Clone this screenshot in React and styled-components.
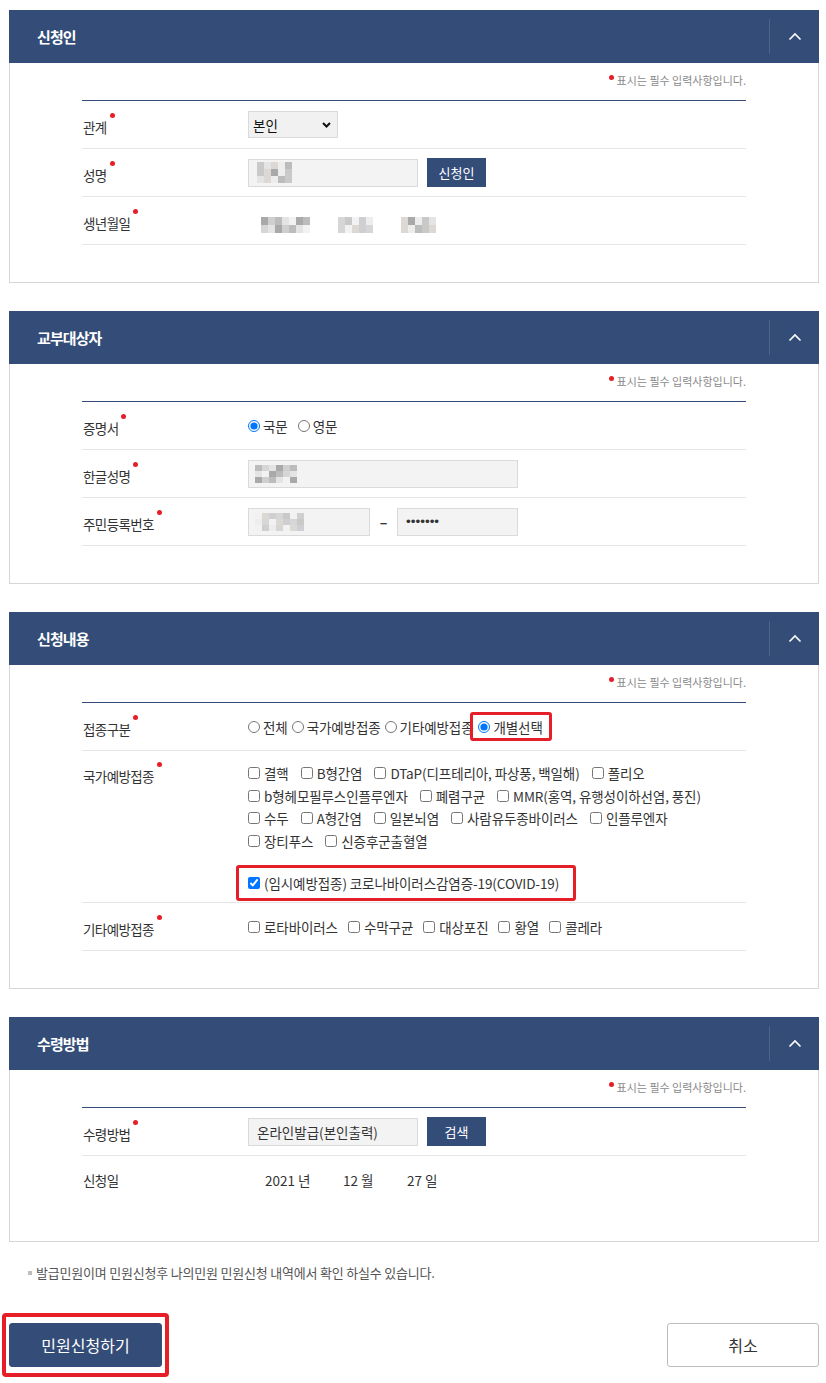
import React from 'react';
import styled, { createGlobalStyle } from 'styled-components';

const NAVY = '#344d78';
const RED = '#e61e27';

const GlobalStyle = createGlobalStyle`
  * { box-sizing: border-box; }
  body {
    margin: 0;
    background: #fff;
    color: #333;
    font-family: "Noto Sans CJK KR", "Noto Sans", sans-serif;
  }
`;

const Page = styled.div`
  width: 826px;
  padding: 10px 7px 6px 9px;
`;

const Panel = styled.section`
  margin-bottom: ${p => (p.$last ? '0' : '28px')};
`;

const PanelHead = styled.div`
  height: 53px;
  background: ${NAVY};
  display: flex;
  align-items: center;
  justify-content: space-between;
`;

const PanelTitle = styled.h2`
  margin: 0;
  padding-left: 28px;
  font-size: 15px;
  font-weight: 700;
  letter-spacing: -0.9px;
  color: #fff;
`;

const Toggle = styled.button`
  width: 50px;
  height: 35px;
  padding: 0;
  border: 0;
  border-left: 1px solid rgba(255, 255, 255, 0.13);
  background: none;
  display: flex;
  align-items: center;
  justify-content: center;
  cursor: pointer;
`;

const PanelBody = styled.div`
  border: 1px solid #d6d6d6;
  border-top: 0;
  padding: 7px 72px 37px;
`;

const Required = styled.p`
  margin: 0 0 10px;
  height: 20px;
  line-height: 20px;
  text-align: right;
  font-size: 11px;
  letter-spacing: 0;
  color: #8a8a8a;
`;

const Dot = styled.span`
  display: inline-block;
  width: 5px;
  height: 5px;
  border-radius: 50%;
  background: ${RED};
  vertical-align: ${p => p.$lift || '15px'};
  margin: 0 3px 0 ${p => p.$gap || '3px'};
`;

const Table = styled.div`
  border-top: 1px solid ${NAVY};
`;

const Row = styled.div`
  display: flex;
  align-items: ${p => (p.$top ? 'flex-start' : 'center')};
  min-height: 48px;
  padding: ${p => p.$pad || '0'};
  border-bottom: ${p => (p.$plain ? '0' : '1px solid #e6e6e6')};
`;

const Label = styled.div`
  width: 166px;
  flex-shrink: 0;
  padding-left: 1px;
  font-size: 13.5px;
  letter-spacing: -0.6px;
  color: #333;
  line-height: ${p => (p.$top ? '22.5px' : 'normal')};
`;

const Cell = styled.div`
  flex: 1;
  display: flex;
  align-items: center;
  font-size: 13px;
  color: #333;
`;

const SelectBox = styled.div`
  position: relative;
  width: 90px;
  height: 27px;
`;

const Select = styled.select`
  appearance: none;
  width: 100%;
  height: 100%;
  padding: 0 0 0 4px;
  border: 1px solid #d9d9d9;
  background: #f1f1f1;
  font: 13.5px "Noto Sans CJK KR", sans-serif;
  color: #111;
`;

const SelectArrow = styled.svg`
  position: absolute;
  right: 7px;
  top: 11px;
  pointer-events: none;
`;

const Field = styled.div`
  width: ${p => p.$w}px;
  height: 28px;
  padding: 0 8px;
  display: flex;
  align-items: center;
  border: 1px solid #dadada;
  background: #f3f3f3;
  font-size: 13.5px;
  color: #333;
  font-family: ${p => (p.$dots ? '"Liberation Sans", sans-serif' : 'inherit')};
`;

const Button = styled.button`
  width: 59px;
  height: 29px;
  margin-left: 9px;
  border: 0;
  background: ${NAVY};
  color: #fff;
  font: 13px "Noto Sans CJK KR", sans-serif;
  cursor: pointer;
`;

const Dash = styled.span`
  width: 27px;
  text-align: center;
  font-weight: 700;
  font-size: 14px;
  color: #333;
`;

const Mosaic = styled.span`
  display: inline-grid;
  grid-template-columns: repeat(${p => p.$cols}, 7px);
  grid-auto-rows: ${p => p.$h || 7}px;
`;

const Tile = styled.i`
  background: ${p => p.$c};
`;

const DateGroup = styled.span`
  display: inline-block;
  width: ${p => p.$w}px;
  font-size: 13.5px;
  color: #333;
`;

const Dates = styled.div`
  display: flex;
  align-items: center;
  padding-left: ${p => p.$pl}px;
`;

const Choice = styled.label`
  display: inline-flex;
  align-items: center;
  margin-right: ${p => p.$gap ?? 10}px;
  font-size: 13.5px;
  letter-spacing: -0.1px;
  line-height: 20px;
  color: #333;
  white-space: nowrap;
`;

const Radio = styled.input.attrs({ type: 'radio' })`
  width: 12px;
  height: 12px;
  margin: 0 3px 0 0;
`;

const Check = styled.input.attrs({ type: 'checkbox' })`
  width: 12px;
  height: 12px;
  margin: 0 4px 0 0;
`;

const Highlight = styled.span`
  display: inline-flex;
  align-items: center;
  height: ${p => p.$h}px;
  margin-left: ${p => p.$ml}px;
  padding: 0 ${p => p.$pr}px 0 ${p => p.$pl}px;
  border: 3px solid ${RED};
  border-radius: 3px;
`;

const CheckList = styled.div`
  flex: 1;
  display: flex;
  flex-direction: column;
`;

const CheckLine = styled.div`
  display: flex;
  align-items: center;
  height: 22.5px;
`;

const CovidLine = styled.div`
  margin-top: 13px;
  height: 36px;
  display: flex;
`;

const FootNote = styled.p`
  margin: 0;
  padding: 23px 0 0 19px;
  display: flex;
  align-items: center;
  line-height: 16px;
  font-size: 13px;
  letter-spacing: -0.2px;
  color: #555;
  &::before {
    content: '';
    width: 4px;
    height: 4px;
    margin-right: 4px;
    background: #bdbdbd;
  }
`;

const Actions = styled.div`
  margin-top: 32px;
  display: flex;
  align-items: center;
  justify-content: space-between;
`;

const Focus = styled.div`
  margin-left: -7px;
  padding: 6px 3px;
  border: 4px solid ${RED};
  border-radius: 4px;
`;

const BigButton = styled.button`
  width: ${p => p.$w}px;
  height: 44px;
  border-radius: 3px;
  border: 1px solid ${p => (p.$primary ? NAVY : '#bdbdbd')};
  background: ${p => (p.$primary ? NAVY : '#fff')};
  color: ${p => (p.$primary ? '#fff' : '#333')};
  font: 16px "Noto Sans CJK KR", sans-serif;
  cursor: pointer;
`;

const GRAYS = ['#e4e4e4', '#c9c9c9', '#d6d6d6', '#bcbcbc', '#ededed', '#cfcfd2', '#a9a9a9', '#dcd8d4', '#f2f2f2'];

const Pixels = ({ cols, rows, seed = 1, h }) => {
  const tiles = [];
  for (let i = 0; i < cols * rows; i++) {
    tiles.push(<Tile key={i} $c={GRAYS[(i * 7 + seed * 5 + ((i * i) % 3)) % GRAYS.length]} />);
  }
  return (
    <Mosaic $cols={cols} $h={h}>
      {tiles}
    </Mosaic>
  );
};

const Chevron = () => (
  <svg width="14" height="9" viewBox="0 0 14 9">
    <polyline points="1.5,7.5 7,2 12.5,7.5" fill="none" stroke="#fff" strokeWidth="1.6" />
  </svg>
);

const Section = ({ title, last, children }) => (
  <Panel $last={last}>
    <PanelHead>
      <PanelTitle>{title}</PanelTitle>
      <Toggle aria-label="접기">
        <Chevron />
      </Toggle>
    </PanelHead>
    <PanelBody>
      <Required>
        <Dot $lift="5px" $gap="0" />
        표시는 필수 입력사항입니다.
      </Required>
      <Table>{children}</Table>
    </PanelBody>
  </Panel>
);

const Req = ({ children, top }) => (
  <Label $top={top}>
    {children}
    <Dot />
  </Label>
);

const NATIONAL = [
  ['결핵', 'B형간염', 'DTaP(디프테리아, 파상풍, 백일해)', '폴리오'],
  ['b형헤모필루스인플루엔자', '폐렴구균', 'MMR(홍역, 유행성이하선염, 풍진)'],
  ['수두', 'A형간염', '일본뇌염', '사람유두종바이러스', '인플루엔자'],
  ['장티푸스', '신증후군출혈열'],
];

const OTHER = ['로타바이러스', '수막구균', '대상포진', '황열', '콜레라'];

export default function App() {
  return (
    <Page>
      <GlobalStyle />

      <Section title="신청인">
        <Row>
          <Req>관계</Req>
          <Cell>
            <SelectBox>
              <Select defaultValue="본인">
                <option>본인</option>
              </Select>
              <SelectArrow width="9" height="6" viewBox="0 0 9 6">
                <polyline points="1,1 4.5,4.5 8,1" fill="none" stroke="#111" strokeWidth="2" />
              </SelectArrow>
            </SelectBox>
          </Cell>
        </Row>
        <Row>
          <Req>성명</Req>
          <Cell>
            <Field $w={170}>
              <Pixels cols={5} rows={3} seed={2} />
            </Field>
            <Button>신청인</Button>
          </Cell>
        </Row>
        <Row>
          <Req>생년월일</Req>
          <Dates $pl={13}>
            <DateGroup $w={77}>
              <Pixels cols={7} rows={2} seed={3} h={8} />
            </DateGroup>
            <DateGroup $w={63}>
              <Pixels cols={5} rows={2} seed={4} h={8} />
            </DateGroup>
            <DateGroup $w={40}>
              <Pixels cols={5} rows={2} seed={5} h={8} />
            </DateGroup>
          </Dates>
        </Row>
      </Section>

      <Section title="교부대상자">
        <Row>
          <Req>증명서</Req>
          <Cell>
            <Choice>
              <Radio name="lang" defaultChecked />
              국문
            </Choice>
            <Choice>
              <Radio name="lang" />
              영문
            </Choice>
          </Cell>
        </Row>
        <Row>
          <Req>한글성명</Req>
          <Cell>
            <Field $w={270} style={{ paddingLeft: 6 }}>
              <Pixels cols={6} rows={3} seed={6} h={6} />
            </Field>
          </Cell>
        </Row>
        <Row>
          <Req>주민등록번호</Req>
          <Cell>
            <Field $w={122} style={{ paddingLeft: 6 }}>
              <Pixels cols={7} rows={3} seed={7} h={6} />
            </Field>
            <Dash>–</Dash>
            <Field $w={121} $dots>
              •••••••
            </Field>
          </Cell>
        </Row>
      </Section>

      <Section title="신청내용">
        <Row>
          <Req>접종구분</Req>
          <Cell>
            <Choice $gap={4}>
              <Radio name="kind" />
              전체
            </Choice>
            <Choice $gap={4}>
              <Radio name="kind" />
              국가예방접종
            </Choice>
            <Choice $gap={0}>
              <Radio name="kind" />
              기타예방접종
            </Choice>
            <Highlight $h={29} $ml={-3} $pl={5} $pr={6}>
              <Choice $gap={0}>
                <Radio name="kind" defaultChecked />
                개별선택
              </Choice>
            </Highlight>
          </Cell>
        </Row>
        <Row $top $pad="11px 0 1px">
          <Req top>국가예방접종</Req>
          <CheckList>
            {NATIONAL.map((line, i) => (
              <CheckLine key={i}>
                {line.map(name => (
                  <Choice key={name} $gap={12}>
                    <Check />
                    {name}
                  </Choice>
                ))}
              </CheckLine>
            ))}
            <CovidLine>
              <Highlight $h={36} $ml={-12} $pl={9} $pr={14}>
                <Choice $gap={0}>
                  <Check defaultChecked />
                  (임시예방접종) 코로나바이러스감염증-19(COVID-19)
                </Choice>
              </Highlight>
            </CovidLine>
          </CheckList>
        </Row>
        <Row>
          <Req>기타예방접종</Req>
          <Cell>
            {OTHER.map(name => (
              <Choice key={name} $gap={10}>
                <Check />
                {name}
              </Choice>
            ))}
          </Cell>
        </Row>
      </Section>

      <Section title="수령방법" last>
        <Row>
          <Req>수령방법</Req>
          <Cell>
            <Field $w={170}>온라인발급(본인출력)</Field>
            <Button>검색</Button>
          </Cell>
        </Row>
        <Row $plain>
          <Label>신청일</Label>
          <Dates $pl={17}>
            <DateGroup $w={78}>2021 년</DateGroup>
            <DateGroup $w={64}>12 월</DateGroup>
            <DateGroup $w={40}>27 일</DateGroup>
          </Dates>
        </Row>
      </Section>

      <FootNote>발급민원이며 민원신청후 나의민원 민원신청 내역에서 확인 하실수 있습니다.</FootNote>

      <Actions>
        <Focus>
          <BigButton $primary $w={153}>
            민원신청하기
          </BigButton>
        </Focus>
        <BigButton $w={152}>취소</BigButton>
      </Actions>
    </Page>
  );
}
